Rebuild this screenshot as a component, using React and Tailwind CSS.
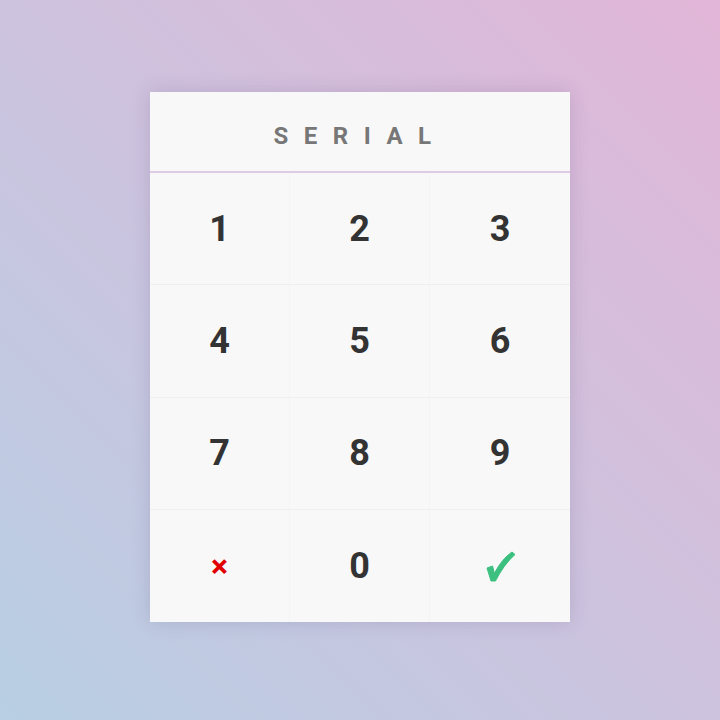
export default function App() {
  const keys = ["1", "2", "3", "4", "5", "6", "7", "8", "9"];
  return (
    <div className="w-[720px] h-[720px] bg-[linear-gradient(45deg,#b8cfe4,#e2b6d8)] flex justify-center pt-[92px] font-['Roboto',sans-serif]">
      <div className="w-[420px] h-[530px] bg-[#f8f8f8] shadow-[0_0_18px_rgba(80,60,110,0.18)] flex flex-col">
        <div className="h-[81px] shrink-0 flex items-center justify-center pt-[9px] border-b-[2px] border-[#dccbe3]">
          <span className="text-[24px] font-bold text-[#777777] tracking-[15.5px] leading-none">SERIAL</span>
        </div>
        <div className="grid grid-cols-3 grid-rows-4 flex-1">
          {keys.map((k, i) => (
            <div
              key={k}
              className={`flex items-center justify-center border-b border-[#efefef] text-[36px] font-bold text-[#333333] ${i % 3 !== 2 ? "border-r border-r-[#f4f4f4]" : ""}`}
            >
              {k}
            </div>
          ))}
          <div className="flex items-center justify-center border-r border-[#f4f4f4] text-[32px] font-bold text-[#e00000]">×</div>
          <div className="flex items-center justify-center border-r border-[#f4f4f4] text-[36px] font-bold text-[#333333]">0</div>
          <div className="flex items-center justify-center pt-[1px]">
            <svg width="30" height="31" viewBox="-1 -1 30 31" className="ml-[1px]">
              <path
                d="M0 16 L5.5 14 L7.5 21.5 C12 12 18.5 4.5 25 0 L28 2.5 C20 9.5 13.5 19 8.5 29 L4 29 Z"
                fill="#3cc07f"
                stroke="#3cc07f"
                strokeWidth="1"
                strokeLinejoin="round"
              />
            </svg>
          </div>
        </div>
      </div>
    </div>
  );
}
